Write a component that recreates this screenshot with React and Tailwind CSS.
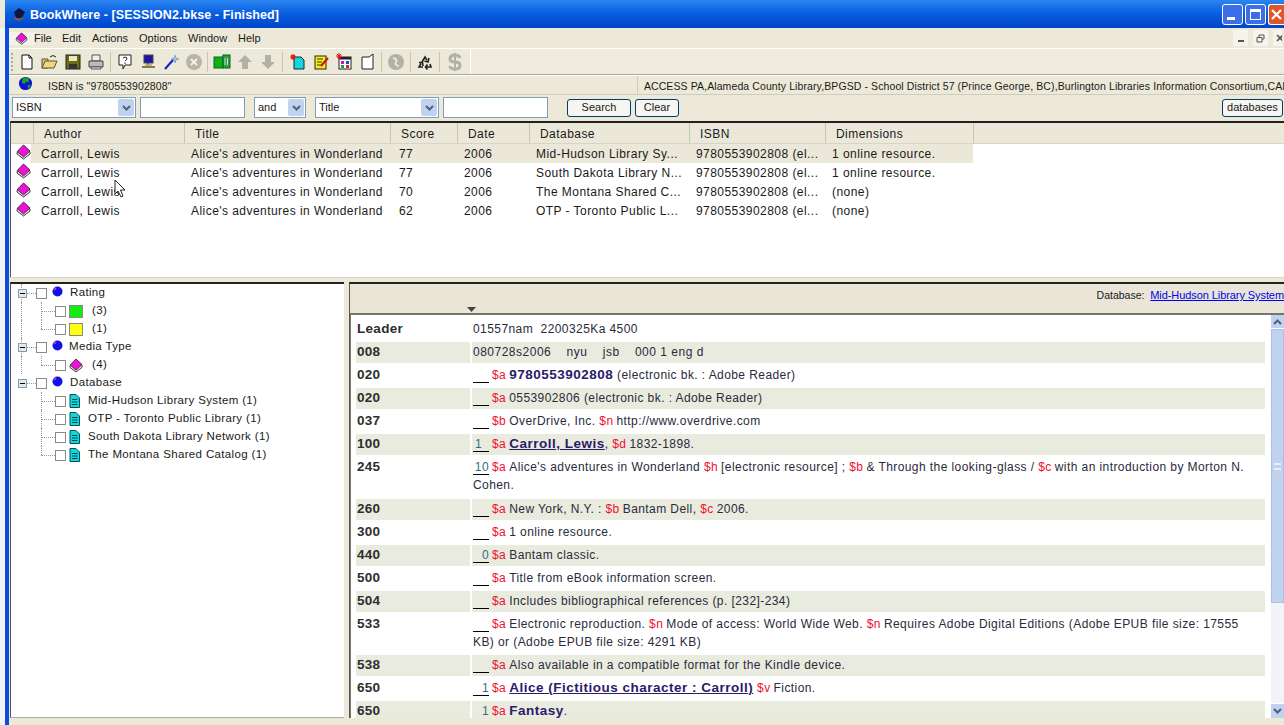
import React from 'react';

const Book = ({ className = 'w-[15px] h-[16px]' }) => (
  <svg viewBox="0 0 15 16" className={className}>
    <path d="M1 8.5 L8 2 L14 8 V10 L7.5 15 L1 10 Z" fill="#e8e8e8" stroke="#222" strokeWidth="0.9" />
    <path d="M1.2 7.5 L7.5 1 L14 7 L7.5 13 Z" fill="#f010d8" stroke="#222" strokeWidth="0.8" />
  </svg>
);

const Ball = () => (
  <svg viewBox="0 0 11 11" className="w-[11px] h-[11px] mb-[3px]">
    <circle cx="5.5" cy="5.5" r="5" fill="#1010e8" />
    <path d="M2 4 L4 2" stroke="#e040c0" strokeWidth="1.4" />
  </svg>
);

const DocCyan = () => (
  <svg viewBox="0 0 11 14" className="w-[11px] h-[14px]">
    <path d="M1 .5 H7 L10.5 4 V13.5 H1 Z" fill="#10d8d8" stroke="#005060" />
    <path d="M3 5.5 H8.5 M3 8 H8.5 M3 10.5 H8.5" stroke="#004050" />
  </svg>
);

const Ico = ({ children }) => (
  <svg viewBox="0 0 18 18" className="w-[18px] h-[18px]">{children}</svg>
);

const toolbarGroups = [
  [
    <Ico key="new"><path d="M4 2 H11 L14 5 V16 H4 Z" fill="#fff" stroke="#111" /><path d="M11 2 V5 H14" fill="none" stroke="#111" /></Ico>,
    <Ico key="open"><path d="M1 6 H7 V15 H1 Z" fill="#e8c860" stroke="#554" /><path d="M1 15 L4 8 H16 L13 15 Z" fill="#f0d878" stroke="#554" /><path d="M9 4 Q12 1 15 4" fill="none" stroke="#222" /></Ico>,
    <Ico key="save"><rect x="2" y="2" width="14" height="14" fill="#6b6b10" stroke="#222" /><rect x="5" y="3" width="8" height="5" fill="#e8e8c8" /><rect x="5" y="11" width="8" height="5" fill="#333" /></Ico>,
    <Ico key="print"><path d="M5 2 H13 V8 H5 Z" fill="#eee" stroke="#555" /><path d="M2 8 H16 V14 H2 Z" fill="#bbb" stroke="#444" /><path d="M4 14 H14 V16 H4 Z" fill="#eee" stroke="#555" /></Ico>,
  ],
  [
    <Ico key="help"><path d="M3 2 H15 V12 H9 L7 16 V12 H3 Z" fill="#fff" stroke="#222" /><path d="M7 5 Q9 3 11 5 Q11 7 9 8" fill="none" stroke="#222" /><path d="M9 9.5 V11" stroke="#222" /></Ico>,
    <Ico key="net"><rect x="5" y="2" width="9" height="8" fill="#1818a8" stroke="#444" /><path d="M9 10 V13 M3 14 H16" stroke="#554" strokeWidth="1.6" /><path d="M6 12 H13" stroke="#c8a848" strokeWidth="1.6" /></Ico>,
    <Ico key="wand"><path d="M3 16 L11 7" stroke="#1818d0" strokeWidth="2" /><path d="M13 2 L14 5 L17 6 L14 7 L13 10 L12 7 L9 6 L12 5 Z" fill="#90c8f0" stroke="#5080b0" strokeWidth=".5" /></Ico>,
    <Ico key="stop"><circle cx="9" cy="9" r="8" fill="#b8b5a8" /><path d="M6 6 L12 12 M12 6 L6 12" stroke="#f4f2e8" strokeWidth="2" /></Ico>,
  ],
  [
    <Ico key="books"><rect x="1" y="4" width="9" height="11" fill="#10b010" stroke="#063" /><rect x="10" y="2" width="7" height="13" fill="#30a030" stroke="#063" /><path d="M12 5 V12 M14.5 5 V12" stroke="#cde" /></Ico>,
    <Ico key="up"><path d="M9 2 L16 9 H12 V16 H6 V9 H2 Z" fill="#b3b1a5" /></Ico>,
    <Ico key="down"><path d="M9 16 L16 9 H12 V2 H6 V9 H2 Z" fill="#b3b1a5" /></Ico>,
  ],
  [
    <Ico key="newdoc"><path d="M5 4 H12 L15 7 V16 H5 Z" fill="#10d8e0" stroke="#222" /><path d="M4 1 V7 M1 4 H7 M2 2 L6 6 M6 2 L2 6" stroke="#f01010" strokeWidth="1.1" /></Ico>,
    <Ico key="edit"><rect x="3" y="3" width="11" height="13" fill="#f8f010" stroke="#222" /><path d="M5 6 H11 M5 9 H10 M5 12 H9" stroke="#333" /><path d="M9 13 L16 5" stroke="#d01010" strokeWidth="2" /></Ico>,
    <Ico key="grid"><rect x="4" y="4" width="12" height="12" fill="#fff" stroke="#222" /><rect x="4" y="4" width="12" height="2.5" fill="#222" /><rect x="6" y="8" width="3" height="3" fill="#d010c0" /><rect x="11" y="8" width="3" height="3" fill="#1050d0" /><rect x="6" y="12" width="3" height="3" fill="#10a040" /><rect x="11" y="12" width="3" height="3" fill="#e02020" /><path d="M4 0 V6 M1 3 H7 M2 1 L6 5 M6 1 L2 5" stroke="#f01010" /></Ico>,
    <Ico key="blank"><path d="M4 4 H11 L15 1 V16 H4 Z" fill="#fff" stroke="#222" /></Ico>,
  ],
  [
    <Ico key="swirl"><circle cx="9" cy="9" r="8" fill="#b3b1a5" /><path d="M6 5 Q11 6 9 9 Q7 12 12 13" fill="none" stroke="#ece9d8" strokeWidth="2" /></Ico>,
  ],
  [
    <Ico key="recycle"><path d="M6 9 L9 4 L11 7 M13 5 L12 9 L8.5 8 M14 11 L15 14 H10 M11.5 11.5 L9.5 14 L11.5 16.5 M7 14 H3 L5 10.5 M3 9.5 L6.5 9.5 L7 13" fill="none" stroke="#222" strokeWidth="1.6" /></Ico>,
  ],
  [
    <Ico key="dollar"><path d="M14 5 Q13 2 9 2 Q4 2 4 6 Q4 9 9 9 Q14 9 14 12.5 Q14 16 9 16 Q4 16 4 13" fill="none" stroke="#b3b1a5" strokeWidth="3" /><path d="M9 0 V18" stroke="#b3b1a5" strokeWidth="2" /></Ico>,
  ],
];

// gaps around the toolbar separators differ a little from group to group
const sepMargins = ['', 'mx-[2.5px]', 'mx-[2px]', 'mx-[3px]', 'mx-[2.5px]', 'mx-[2.5px]', 'mx-[3px]'];

const Select = ({ value, widthClass }) => (
  <div className={`${widthClass} h-[21px] bg-white border border-[#7f9db9] flex items-center justify-between pl-[3px] pr-px shrink-0`}>
    <span>{value}</span>
    <span className="w-[16px] h-[17px] bg-[#c1d2ee] rounded-[2px] flex items-center justify-center">
      <svg viewBox="0 0 9 6" className="w-[9px] h-[6px]">
        <path d="M1 1 L4.5 4.5 L8 1" fill="none" stroke="#4d6185" strokeWidth="2" />
      </svg>
    </span>
  </div>
);

const Btn = ({ children, className }) => (
  <button className={`h-[18px] bg-[#f6f5ef] border border-[#003c74] rounded-[3px] flex items-center justify-center ${className}`}>
    {children}
  </button>
);

const columns = [
  { name: 'Author', head: 'pl-[10px]', cell: 'pl-[8px]' },
  { name: 'Title', head: 'pl-[10px]', cell: 'pl-[7px]' },
  { name: 'Score', head: 'pl-[10px]', cell: 'pl-[9px]' },
  { name: 'Date', head: 'pl-[10px]', cell: 'pl-[7px]' },
  { name: 'Database', head: 'pl-[10px]', cell: 'pl-[7px]' },
  { name: 'ISBN', head: 'pl-[10px]', cell: 'pl-[7px]' },
  { name: 'Dimensions', head: 'pl-[10px]', cell: 'pl-[7px]' },
];

const results = [
  ['Carroll, Lewis', "Alice's adventures in Wonderland", '77', '2006', 'Mid-Hudson Library Sy...', '9780553902808 (el...', '1 online resource.'],
  ['Carroll, Lewis', "Alice's adventures in Wonderland", '77', '2006', 'South Dakota Library N...', '9780553902808 (el...', '1 online resource.'],
  ['Carroll, Lewis', "Alice's adventures in Wonderland", '70', '2006', 'The Montana Shared C...', '9780553902808 (el...', '(none)'],
  ['Carroll, Lewis', "Alice's adventures in Wonderland", '62', '2006', 'OTP - Toronto Public L...', '9780553902808 (el...', '(none)'],
];

const gridCols = 'grid grid-cols-[151px_206px_67px_72px_160px_136px_148px]';

const TreeRow = ({ level, last, trunk, children }) => (
  <div className="relative h-[18px] flex items-center">
    {trunk && <span className="absolute left-[10px] top-0 bottom-0 border-l border-dotted border-[#999]" />}
    {level === 0 ? (
      <>
        <span className="ml-[7px] w-[9px] h-[9px] border border-[#7f9db9] bg-[#e8e8e0] flex items-center justify-center z-10">
          <span className="w-[5px] h-px bg-black" />
        </span>
        <span className="w-[9px] border-t border-dotted border-[#999]" />
        <span className="w-[11px] h-[11px] bg-white border border-[#8a8a8a] mr-[5px]" />
      </>
    ) : (
      <>
        <span className={`absolute left-[30px] top-0 border-l border-dotted border-[#999] ${last ? 'h-[9px]' : 'bottom-0'}`} />
        <span className="ml-[30px] w-[14px] border-t border-dotted border-[#999]" />
        <span className="w-[11px] h-[11px] bg-white border border-[#8a8a8a] mr-[3px]" />
      </>
    )}
    {children}
  </div>
);

const Swatch = ({ color }) => <span className={`w-[14px] h-[13px] border border-[#888] ${color}`} />;

const S = ({ c }) => <span className="text-[#f01030] mr-[3px]">{c}</span>;
const B = ({ c }) => <span className="font-bold text-[#2c1a6a] text-[13.5px] tracking-[0.5px]">{c}</span>;
const L = ({ c }) => <span className="font-bold text-[#2c1a6a] text-[13.5px] tracking-[0.5px] underline">{c}</span>;

const Ind = ({ c = '', plain, left }) => (
  <span className={`inline-block w-[16px] h-[17px] leading-[18px] mr-[3px] text-[#3a6a80] align-top ${left ? 'text-left pl-[2px]' : 'text-right'} ${plain ? '' : 'border-b border-black'}`}>{c}</span>
);

const records = [
  { tag: 'Leader', body: <>01557nam&nbsp; 2200325Ka 4500</> },
  { tag: '008', body: <span className="tracking-[0.5px]">080728s2006 &nbsp;&nbsp; nyu &nbsp;&nbsp; jsb &nbsp;&nbsp; 000 1 eng d</span> },
  { tag: '020', body: <><Ind /><S c="$a" /><B c="9780553902808" /> (electronic bk. : Adobe Reader)</> },
  { tag: '020', body: <><Ind /><S c="$a" />0553902806 (electronic bk. : Adobe Reader)</> },
  { tag: '037', body: <><Ind /><S c="$b" />OverDrive, Inc. <S c="$n" />http://www.overdrive.com</> },
  { tag: '100', body: <><Ind c="1" left /><S c="$a" /><L c="Carroll, Lewis" />, <S c="$d" />1832-1898.</> },
  { tag: '245', extra: true, body: <><Ind c="10" /><S c="$a" />Alice's adventures in Wonderland <S c="$h" />[electronic resource] ; <S c="$b" />&amp; Through the looking-glass / <S c="$c" />with an introduction by Morton N.<br />Cohen.</> },
  { tag: '260', body: <><Ind /><S c="$a" />New York, N.Y. : <S c="$b" />Bantam Dell, <S c="$c" />2006.</> },
  { tag: '300', body: <><Ind /><S c="$a" />1 online resource.</> },
  { tag: '440', body: <><Ind c="0" /><S c="$a" />Bantam classic.</> },
  { tag: '500', body: <><Ind /><S c="$a" />Title from eBook information screen.</> },
  { tag: '504', body: <><Ind /><S c="$a" />Includes bibliographical references (p. [232]-234)</> },
  { tag: '533', body: <><Ind /><S c="$a" />Electronic reproduction. <S c="$n" />Mode of access: World Wide Web. <S c="$n" />Requires Adobe Digital Editions (Adobe EPUB file size: 17555<br />KB) or (Adobe EPUB file size: 4291 KB)</> },
  { tag: '538', body: <><Ind /><S c="$a" />Also available in a compatible format for the Kindle device.</> },
  { tag: '650', body: <><Ind c="1" /><S c="$a" /><L c="Alice (Fictitious character : Carroll)" /> <S c="$v" />Fiction.</> },
  { tag: '650', body: <><Ind c="1" plain /><S c="$a" /><B c="Fantasy" />.</> },
];

export default function App() {
  return (
    <div className="relative w-[1284px] h-[725px] overflow-hidden flex flex-col bg-[#ece9d8] text-[11px] text-[#1a1a1a] font-['Liberation_Sans',Arial,sans-serif]">
      {/* title bar */}
      <div className="h-[28px] ml-[5px] pt-[3px] shrink-0 flex items-center bg-gradient-to-b from-[#2a86f0] via-[#0a5ce0] to-[#0046c8] pl-[7px]">
        <svg viewBox="0 0 14 14" className="w-[14px] h-[14px] mr-[4px] mb-[3px]">
          <path d="M2 5 L7 1 L13 5 L10 11 L4 11 Z" fill="#141440" />
          <path d="M2 11 L7 13 L11 11" stroke="#7a5a40" strokeWidth="2" fill="none" />
        </svg>
        <span className="text-white font-bold text-[12.5px] tracking-[0.08px]">BookWhere - [SESSION2.bkse - Finished]</span>
        <div className="ml-auto flex gap-[2px] mb-[2px]">
          <div className="w-[21px] h-[21px] rounded-[3px] border border-white bg-[#3c6ee8] flex items-end justify-start p-[4px]">
            <span className="w-[8px] h-[3px] bg-white" />
          </div>
          <div className="w-[21px] h-[21px] rounded-[3px] border border-white bg-[#3c6ee8] flex items-center justify-center">
            <span className="w-[11px] h-[11px] border border-white border-t-[3px]" />
          </div>
          <div className="w-[16px] h-[21px] rounded-l-[3px] border border-r-0 border-white bg-[#e0552c] flex items-center justify-start pl-[2px] overflow-hidden">
            <svg viewBox="0 0 11 11" className="w-[11px] h-[11px] shrink-0">
              <path d="M1 1 L10 10 M10 1 L1 10" stroke="#fff" strokeWidth="2.2" />
            </svg>
          </div>
        </div>
      </div>

      <div className="flex-1 min-h-0 flex">
        {/* desktop peeking at the left, then the window border */}
        <div className="w-[5px] bg-[#f4f4f4] shrink-0" />
        <div className="w-[4px] bg-[#0a4de0] shrink-0" />

        <div className="flex-1 min-w-0 flex flex-col">
          {/* menu */}
          <div className="h-[20px] shrink-0 flex items-center">
            <span className="w-[25px] flex justify-center bg-[#f4f2ea]"><Book className="w-[13px] h-[13px]" /></span>
            <span className="w-[28px] pt-px">File</span>
            <span className="w-[30px] pt-px">Edit</span>
            <span className="w-[47px] pt-px">Actions</span>
            <span className="w-[49px] pt-px">Options</span>
            <span className="w-[50px] pt-px">Window</span>
            <span className="pt-px">Help</span>
            <div className="ml-auto flex gap-[5px] pr-[2px]">
              <span className="w-[15px] h-[16px] bg-[#f6f4ec] flex items-end justify-center pb-[4px]"><span className="w-[6px] h-[2px] bg-[#555]" /></span>
              <span className="w-[15px] h-[16px] bg-[#f6f4ec] flex items-center justify-center">
                <svg viewBox="0 0 9 9" className="w-[9px] h-[9px]"><path d="M3 3 V1 H8 V5 H6 M1 3.5 H6 V8 H1 Z" fill="none" stroke="#555" /></svg>
              </span>
              <span className="w-[9px] h-[16px] bg-[#f6f4ec] flex items-center overflow-hidden pl-[3px]">
                <svg viewBox="0 0 8 8" className="w-[8px] h-[8px] shrink-0"><path d="M1 1 L7 7 M7 1 L1 7" stroke="#555" strokeWidth="1.6" /></svg>
              </span>
            </div>
          </div>
          <div className="h-px shrink-0 bg-white" />

          {/* toolbar */}
          <div className="h-[26px] shrink-0 flex items-center border-b border-[#aca899] pl-[2px]">
            <span className="w-[3px] h-[18px] border-l-2 border-dotted border-[#aaa] mr-[1px]" />
            <div className="flex items-center w-[456px]">
              {toolbarGroups.map((group, i) => (
                <React.Fragment key={i}>
                  {i > 0 && <span className={`w-px h-[20px] bg-[#c8c5b5] ${sepMargins[i]}`} />}
                  {group.map((icon, j) => (
                    <span key={j} className="w-[23px] flex justify-center">{icon}</span>
                  ))}
                </React.Fragment>
              ))}
            </div>
            <div className="ml-auto w-[816px] h-full border-l border-[#fff] bg-[#efecde]" />
          </div>

          {/* query line */}
          <div className="h-[20px] shrink-0 flex items-center border-t border-white border-b border-b-[#cfccbc] text-[10.5px] tracking-[0.1px]">
            <span className="ml-[9px] w-[16px] flex justify-center mb-[3px]">
              <svg viewBox="0 0 16 16" className="w-[15px] h-[15px]">
                <circle cx="8" cy="8" r="7" fill="#1010d8" />
                <path d="M5 2 Q9 1 12 3 L11 7 L8 6 L7 9 L4 7 Z M10 10 L14 9 L11 14 Z" fill="#10a818" />
              </svg>
            </span>
            <span className="ml-[14px] w-[589px] shrink-0 pt-[3px]">ISBN is "9780553902808"</span>
            <span className="w-px h-full bg-[#cfccbc]" />
            <span className="ml-[6px] pt-[3px] whitespace-nowrap overflow-hidden">ACCESS PA,Alameda County Library,BPGSD - School District 57 (Prince George, BC),Burlington Libraries Information Consortium,CAL</span>
          </div>

          {/* search form */}
          <div className="h-[25px] shrink-0 flex items-center pl-[3px]">
            <Select value="ISBN" widthClass="w-[124px]" />
            <div className="ml-[4px] w-[105px] h-[21px] bg-white border border-[#7f9db9]" />
            <div className="ml-[9px]"><Select value="and" widthClass="w-[52px]" /></div>
            <div className="ml-[9px]"><Select value="Title" widthClass="w-[124px]" /></div>
            <div className="ml-[4px] w-[105px] h-[21px] bg-white border border-[#7f9db9]" />
            <Btn className="ml-[19px] w-[64px]">Search</Btn>
            <Btn className="ml-[4px] w-[44px]">Clear</Btn>
            <Btn className="ml-auto mr-px w-[61px]">databases</Btn>
          </div>

          {/* results */}
          <div className="h-[156px] shrink-0 mt-[1px] ml-px bg-white border-t-2 border-l border-t-[#222] border-l-[#555] overflow-hidden text-[12px] tracking-[0.45px]">
            <div className="flex h-[21px] bg-[#ebe8da] border-b border-[#d8d5c5]">
              <span className="w-[22px] shrink-0" />
              <div className={gridCols}>
                {columns.map((col) => (
                  <span key={col.name} className={`${col.head} h-[20px] leading-[22px] border-l border-[#c8c5b5]`}>{col.name}</span>
                ))}
              </div>
              <span className="border-l border-[#c8c5b5]" />
            </div>
            {results.map((row, i) => (
              <div key={i} className="flex h-[19px] items-center">
                <span className="w-[22px] shrink-0 pl-[5px] mb-[3px]"><Book className="w-[15px] h-[16px]" /></span>
                <div className={`${gridCols} ${i === 0 ? 'bg-[#ebe8da]' : ''} h-[19px] items-center -ml-[2px] pl-[2px]`}>
                  {row.map((cell, j) => (
                    <span key={j} className={`${columns[j].cell} whitespace-nowrap overflow-hidden`}>{cell}</span>
                  ))}
                </div>
              </div>
            ))}
          </div>

          <div className="h-[5px] shrink-0 border-t border-[#d8d5c5]" />

          {/* lower panes */}
          <div className="flex-1 min-h-0 flex pb-[7px]">
            <div className="w-[334px] ml-px shrink-0 bg-white border-t-2 border-l border-t-[#222] border-l-[#555] border-b border-b-[#aaa] text-[11.5px] tracking-[0.35px]">
              <TreeRow level={0} trunk><Ball /><span className="ml-[7px]">Rating</span></TreeRow>
              <TreeRow level={1} trunk><Swatch color="bg-[#10f010]" /><span className="ml-[9px]">(3)</span></TreeRow>
              <TreeRow level={1} last trunk><Swatch color="bg-[#ffff10]" /><span className="ml-[9px]">(1)</span></TreeRow>
              <TreeRow level={0} trunk><Ball /><span className="ml-[6px]">Media Type</span></TreeRow>
              <TreeRow level={1} last trunk><Book className="w-[14px] h-[15px]" /><span className="ml-[9px]">(4)</span></TreeRow>
              <TreeRow level={0}><Ball /><span className="ml-[7px]">Database</span></TreeRow>
              <TreeRow level={1}><DocCyan /><span className="ml-[8px]">Mid-Hudson Library System (1)</span></TreeRow>
              <TreeRow level={1}><DocCyan /><span className="ml-[8px]">OTP - Toronto Public Library (1)</span></TreeRow>
              <TreeRow level={1}><DocCyan /><span className="ml-[8px]">South Dakota Library Network (1)</span></TreeRow>
              <TreeRow level={1} last><DocCyan /><span className="ml-[8px]">The Montana Shared Catalog (1)</span></TreeRow>
            </div>

            <div className="ml-[5px] flex-1 min-w-0 flex flex-col border-t-2 border-l border-t-[#222] border-l-[#555]">
              <div className="h-[31px] shrink-0 bg-[#e9e6d8] border-b-2 border-[#77756a] pl-[117px] flex">
                <svg viewBox="0 0 9 5" className="w-[9px] h-[5px] mt-[23px] shrink-0"><path d="M0 0 H9 L4.5 5 Z" fill="#444" /></svg>
                <div className="ml-auto pt-[3px] whitespace-nowrap h-[22px] leading-[16px] text-[10.5px]">
                  Database:&nbsp; <span className="text-[#0000f0] underline text-[11px] tracking-[-0.08px]">Mid-Hudson Library System</span>
                </div>
              </div>
              <div className="flex-1 min-h-0 flex border-l border-[#77756a]">
                <div className="flex-1 min-w-0 overflow-hidden bg-white pl-[5px] pr-[6px] pt-[4px] text-[12px] text-[#2a2a3a] tracking-[0.42px]">
                  {records.map((rec, i) => (
                    <div key={i} className="flex gap-[2px] mb-[2px]">
                      <div className={`w-[114px] shrink-0 pl-px font-bold text-[#2e2e2e] text-[13.5px] tracking-[0.3px] leading-[18px] pt-px ${i % 2 === 1 ? 'bg-[#e9ebdf]' : ''}`}>{rec.tag}</div>
                      <div className={`flex-1 min-w-0 pl-px leading-[18px] pt-px ${rec.extra ? 'pb-[3px]' : 'pb-[2px]'} ${i % 2 === 1 ? 'bg-[#e9ebdf]' : ''}`}>{rec.body}</div>
                    </div>
                  ))}
                </div>
                {/* scrollbar */}
                <div className="w-[13px] shrink-0 bg-[#f3f4fa] flex flex-col">
                  <div className="h-[14px] bg-[#c1d2ee] flex items-center justify-center border-b border-white">
                    <svg viewBox="0 0 9 6" className="w-[9px] h-[6px]"><path d="M1 5 L4.5 1.5 L8 5" fill="none" stroke="#4d6185" strokeWidth="2" /></svg>
                  </div>
                  <div className="h-[274px] bg-[#c1d2ee] border border-[#aac0ea] flex items-center justify-center">
                    <span className="w-[7px] h-[7px] border-y-2 border-[#e8eefa]" />
                  </div>
                  <div className="flex-1" />
                  <div className="h-[15px] bg-[#c1d2ee] flex items-center justify-center border-t border-white">
                    <svg viewBox="0 0 9 6" className="w-[9px] h-[6px]"><path d="M1 1 L4.5 4.5 L8 1" fill="none" stroke="#4d6185" strokeWidth="2" /></svg>
                  </div>
                </div>
              </div>
            </div>
          </div>
        </div>
      </div>

      {/* mouse pointer sitting over the grid */}
      <svg viewBox="0 0 12 20" className="absolute left-[114px] top-[179px] w-[12px] h-[20px]">
        <path d="M1 1 V15 L4 12 L7 18 L9 17 L6.5 11 H11 Z" fill="#fff" stroke="#222" />
      </svg>
    </div>
  );
}
